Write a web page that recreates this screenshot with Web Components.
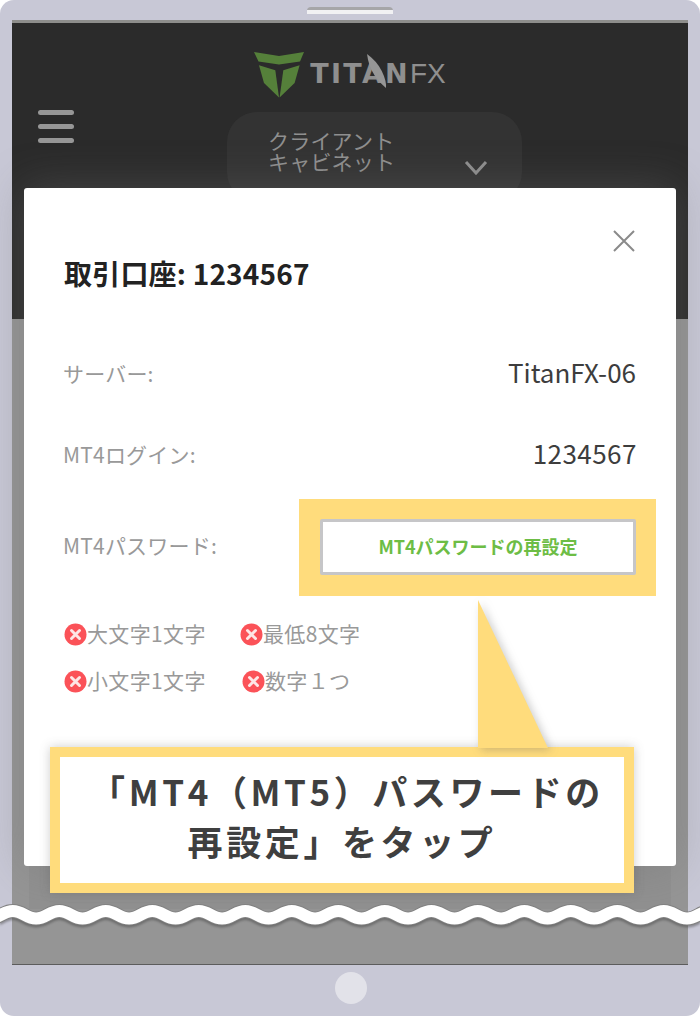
<!DOCTYPE html>
<html lang="ja">
<head>
<meta charset="utf-8">
<title>MT4 パスワードの再設定</title>
<style>
    html, body{
        margin: 0;
        background: white;
    }
</style>
</head>
<body>
<device-frame>
    <site-header></site-header>
    <page-back></page-back>
    <account-modal>
        <modal-row label="サーバー:" value="TitanFX-06" style="margin-top: 60px"></modal-row>
        <modal-row label="MT4ログイン:" value="1234567" style="margin-top: 41px; --value-spacing: .45px"></modal-row>
        <password-row label="MT4パスワード:">MT4パスワードの再設定</password-row>
        <rule-list>
            <rule-item>大文字1文字</rule-item>
            <rule-item>最低8文字</rule-item>
            <rule-item>小文字1文字</rule-item>
            <rule-item style="margin-left: 2px">数字１つ</rule-item>
        </rule-list>
    </account-modal>
    <call-out>「MT4（MT5）パスワードの<br>再設定」をタップ</call-out>
    <wave-cut></wave-cut>
</device-frame>

<script>
const CJK = `'Noto Sans CJK JP', 'Noto Sans', sans-serif`;

function makeShadow(el, html){
    const template = document.createElement('template');
    template.innerHTML = html;
    el.attachShadow({ mode: 'open' }).appendChild(template.content.cloneNode(true));
}

class DeviceFrame extends HTMLElement {
    constructor() {
        super();
        makeShadow(this, `
<style>
    :host{
        display: block;
        position: relative;
        width: 700px;
        height: 1016px;
        overflow: hidden;
        font-family: ${CJK};
    }
    .body{
        box-sizing: border-box;
        height: 100%;
        background: #c8c8d6;
        border-radius: 14px;
        padding: 20px 12px 0;
        display: flex;
        flex-direction: column;
    }
    .speaker{
        position: absolute;
        left: 307px;
        top: 7px;
        width: 86px;
        height: 7px;
        border-radius: 4px 4px 0 0;
        background: linear-gradient(#a6a6a8 0 3px, #f1f1f3 3px);
    }
    .screen{
        height: 945px;
        flex: none;
        display: flex;
        flex-direction: column;
        border-top: 3px solid #8e8e8c;
        border-bottom: 1px solid #5c5c5c;
        box-sizing: border-box;
        background: #959595;
    }
    .home{
        flex: none;
        width: 32px;
        height: 32px;
        border-radius: 50%;
        background: #e2e2e9;
        margin: 7px 0 0 323px;
    }
</style>
<div class="speaker"></div>
<div class="body">
    <div class="screen"><slot></slot></div>
    <div class="home"></div>
</div>`);
    }
}

class SiteHeader extends HTMLElement {
    constructor() {
        super();
        makeShadow(this, `
<style>
    :host{
        display: block;
        flex: none;
        height: 296px;
        background: #2b2b2b;
        color: #8f8f8f;
    }
    .logo{
        display: flex;
        justify-content: center;
        align-items: center;
        gap: 6px;
        padding-top: 29px;
    }
    .word{
        position: relative;
        display: flex;
        align-items: center;
        margin-top: -3px;
        font: 700 27px/1 'DejaVu Sans', sans-serif;
        letter-spacing: 2.3px;
        color: #8f8f8f;
    }
    .fx{
        font: 400 28px/1 'Liberation Sans', sans-serif;
        letter-spacing: 0;
    }
    .word svg{
        position: absolute;
        left: 50px;
        top: -7px;
    }
    .bar{
        display: flex;
        padding-left: 26px;
    }
    .burger{
        width: 36px;
        display: flex;
        flex-direction: column;
        gap: 9px;
        margin-top: 12px;
    }
    .burger i{
        display: block;
        height: 5px;
        border-radius: 3px;
        background: #979797;
    }
    .pill{
        box-sizing: border-box;
        margin-left: 153px;
        margin-top: 14px;
        width: 295px;
        height: 90px;
        border-radius: 30px;
        background: #333333;
        padding: 18px 0 0 41px;
        display: flex;
        font-size: 21px;
        line-height: 21px;
        letter-spacing: .2px;
    }
    .pill svg{
        margin: 30px 0 0 69px;
    }
</style>
<div class="logo">
    <svg width="50" height="46" viewBox="0 0 50 46">
        <path fill="#55803a" d="M0 0 L25 4 L50 0 L46 9.5 L25 12.5 L4.5 9.5Z"/>
        <path fill="#55803a" d="M5 13.3 L21.3 18.3 L25 45.5 L10 31Z"/>
        <path fill="#55803a" d="M45.6 13.3 L29.3 18.3 L25.6 45.5 L40.6 31Z"/>
    </svg>
    <div class="word">TITAN<span class="fx">FX</span>
        <svg width="30" height="44" viewBox="0 0 30 44"><path fill="#969696" d="M7 1 C20 10 27 26 26 35 C18 28 9 18 7 1Z"/></svg>
    </div>
</div>
<div class="bar">
    <div class="burger"><i></i><i></i><i></i></div>
    <div class="pill">
        <div>クライアント<br>キャビネット</div>
        <svg width="24" height="15" viewBox="0 0 24 15"><path d="M2 2 L12 13 L22 2" fill="none" stroke="#8f8f8f" stroke-width="3"/></svg>
    </div>
</div>`);
    }
}

class PageBack extends HTMLElement {
    constructor() {
        super();
        makeShadow(this, `
<style>
    :host{
        display: block;
        flex: 1;
        padding: 0 17px;
    }
    div{
        height: 590px;
        background: #909090;
    }
</style>
<div></div>`);
    }
}

class AccountModal extends HTMLElement {
    constructor() {
        super();
        makeShadow(this, `
<style>
    :host{
        display: block;
        position: absolute;
        left: 24px;
        top: 188px;
        width: 652px;
        height: 678px;
        box-sizing: border-box;
        padding: 65px 40px 0;
        background: white;
        border-radius: 3px;
        box-shadow: 0 0 44px rgba(112,112,112,.4);
    }
    h2{
        margin: 0;
        font-size: 28px;
        line-height: 40px;
        font-weight: 700;
        letter-spacing: .2px;
        color: #222222;
    }
    .close{
        position: absolute;
        right: 40px;
        top: 41px;
    }
</style>
<svg class="close" width="24" height="24" viewBox="0 0 24 24"><path d="M2 2 L22 22 M22 2 L2 22" stroke="#8a8a8a" stroke-width="2" fill="none"/></svg>
<h2>取引口座: 1234567</h2>
<slot></slot>`);
    }
}

class ModalRow extends HTMLElement {
    constructor() {
        super();
        makeShadow(this, `
<style>
    :host{
        display: flex;
        justify-content: space-between;
        align-items: center;
        height: 40px;
    }
    .label{
        font-size: 21px;
        letter-spacing: .2px;
        color: #999999;
        margin-left: -1px;
    }
    .value{
        font-size: 26px;
        letter-spacing: var(--value-spacing, 0px);
        color: #3d3d3d;
        margin: -3px calc(var(--value-spacing, 0px) * -2) 0 0;
    }
</style>
<span class="label"></span><span class="value"></span>`);
    }
    connectedCallback() {
        this.shadowRoot.querySelector('.label').textContent = this.getAttribute('label');
        this.shadowRoot.querySelector('.value').textContent = this.getAttribute('value');
    }
}

class PasswordRow extends HTMLElement {
    constructor() {
        super();
        makeShadow(this, `
<style>
    :host{
        display: flex;
        justify-content: space-between;
        align-items: center;
        margin: 25px -20px 0 0;
    }
    .label{
        font-size: 21px;
        letter-spacing: .2px;
        color: #999999;
        margin: -5px 0 0 -1px;
    }
    .mark{
        background: #ffdc7c;
        padding: 20px 20px 21px 21px;
    }
    button{
        display: block;
        box-sizing: border-box;
        width: 316px;
        height: 56px;
        background: white;
        border: 3px solid #c6c6c8;
        border-radius: 2px;
        color: #6dbd45;
        font: 700 18px ${CJK};
        padding: 0 0 3px;
    }
</style>
<span class="label"></span>
<div class="mark"><button><slot></slot></button></div>`);
    }
    connectedCallback() {
        this.shadowRoot.querySelector('.label').textContent = this.getAttribute('label');
    }
}

class RuleList extends HTMLElement {
    constructor() {
        super();
        makeShadow(this, `
<style>
    :host{
        display: grid;
        grid-template-columns: 176px auto;
        grid-auto-rows: 46.5px;
        margin-top: 14px;
    }
</style>
<slot></slot>`);
    }
}

class RuleItem extends HTMLElement {
    constructor() {
        super();
        makeShadow(this, `
<style>
    :host{
        display: flex;
        align-items: center;
        font-size: 21px;
        letter-spacing: .35px;
        color: #999999;
        white-space: nowrap;
    }
    svg{
        flex: none;
        margin-top: 3px;
    }
</style>
<svg width="23" height="23" viewBox="0 0 23 23">
    <circle cx="11.5" cy="11.5" r="11" fill="#fb5258"/>
    <path d="M7.5 7.5 L15.5 15.5 M15.5 7.5 L7.5 15.5" stroke="#fde6e6" stroke-width="3" stroke-linecap="round"/>
</svg>
<slot></slot>`);
    }
}

class CallOut extends HTMLElement {
    constructor() {
        super();
        makeShadow(this, `
<style>
    :host{
        display: block;
        position: absolute;
        left: 50px;
        top: 747px;
        width: 584px;
        height: 146px;
        box-sizing: border-box;
        border: 10px solid #ffdc7c;
        background: white;
        box-shadow: 0 0 10px rgba(90,90,90,.3);
    }
    .text{
        position: relative;
        padding-top: 9px;
        text-align: center;
        text-indent: 10px;
        font-size: 35px;
        line-height: 50px;
        font-weight: 700;
        letter-spacing: 3.6px;
        color: #3f3f3f;
    }
    svg{
        position: absolute;
        left: 418px;
        top: -157px;
        filter: drop-shadow(3px 2px 4px rgba(90,90,90,.3));
    }
</style>
<svg width="80" height="148" viewBox="0 0 80 148"><path fill="#ffdc7c" d="M0 0 L0 148 L70 148Z"/></svg>
<div class="text"><slot></slot></div>`);
    }
}

class WaveCut extends HTMLElement {
    constructor() {
        super();
        makeShadow(this, `
<style>
    :host{
        display: block;
        position: absolute;
        left: 0;
        top: 895px;
        width: 700px;
        height: 40px;
    }
    svg{
        display: block;
        filter: drop-shadow(0 2px 1px rgba(60,60,60,.45));
    }
</style>
<svg width="700" height="40" viewBox="0 0 700 40">
    <path class="edge" fill="none" stroke="#828282" stroke-width="14"/>
    <path class="fill" fill="none" stroke="white" stroke-width="12"/>
</svg>`);
        // sine-like line, crest every 46.5px
        const period = 46.5;
        let x = 12.8 - period;
        let d = `M${x} 16`;
        while (x < 720) {
            const half = period / 2;
            d += ` C${x + 10} 16 ${x + half - 10} 23.5 ${x + half} 23.5`;
            d += ` C${x + half + 10} 23.5 ${x + period - 10} 16 ${x + period} 16`;
            x += period;
        }
        this.shadowRoot.querySelector('.edge').setAttribute('d', d);
        this.shadowRoot.querySelector('.fill').setAttribute('d', d);
    }
}

customElements.define('device-frame', DeviceFrame);
customElements.define('site-header', SiteHeader);
customElements.define('page-back', PageBack);
customElements.define('account-modal', AccountModal);
customElements.define('modal-row', ModalRow);
customElements.define('password-row', PasswordRow);
customElements.define('rule-list', RuleList);
customElements.define('rule-item', RuleItem);
customElements.define('call-out', CallOut);
customElements.define('wave-cut', WaveCut);
</script>
</body>
</html>
